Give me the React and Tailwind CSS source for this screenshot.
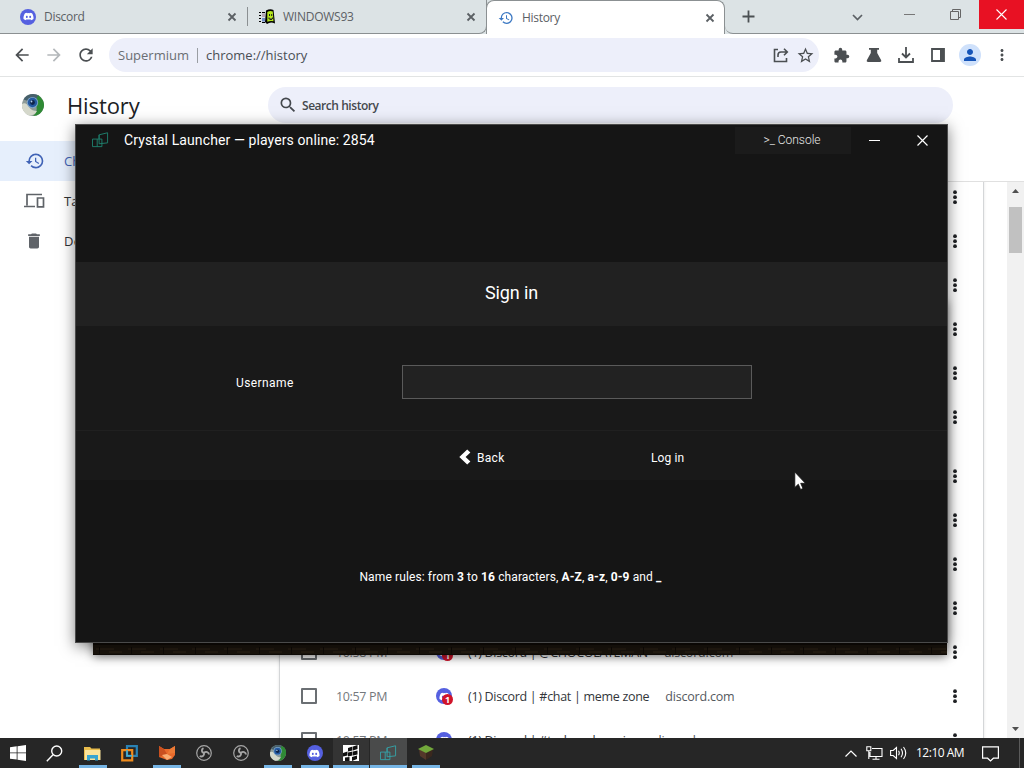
import React from 'react';
import {
  MdArrowBack,
  MdArrowForward,
  MdRefresh,
  MdStarBorder,
  MdExtension,
  MdPerson,
  MdMoreVert,
  MdSearch,
  MdHistory,
  MdDelete,
} from 'react-icons/md';
import { FaDiscord } from 'react-icons/fa';

// History rows, the first ones sit behind the launcher window
const firstGroup = [1, 2, 3, 4, 5, 6];
const secondGroup = [
  { id: 7 },
  { id: 8 },
  { id: 9 },
  { id: 10 },
  { id: 11, time: '10:58 PM', title: '(1) Discord | @CHOCOLATEMAN', site: 'discord.com', badge: true },
  { id: 12, time: '10:57 PM', title: '(1) Discord | #chat | meme zone', site: 'discord.com', badge: true },
  { id: 13, time: '10:57 PM', title: '(1) Discord | #tech and movies', site: 'discord.com' },
];

function DiscordIcon({ badge }) {
  return (
    <span className="relative flex w-4 h-4 rounded-full bg-[#5560e0] items-center justify-center text-white shrink-0">
      <FaDiscord className="w-[11px] h-[11px]" />
      {badge && (
        <span className="absolute -right-px -bottom-px w-[11px] h-[11px] rounded-full bg-[#d0142a] text-[9px] leading-[11px] font-bold text-center">
          1
        </span>
      )}
    </span>
  );
}

function CloseIcon({ className }) {
  return (
    <svg className={className} viewBox="0 0 10 10" fill="none" stroke="currentColor" strokeWidth="1.8">
      <path d="M1.500 1.500l7 7M8.500 1.500l-7 7" />
    </svg>
  );
}

function SupermiumIcon({ className }) {
  return (
    <svg className={className} viewBox="0 0 22 22">
      <circle cx="11" cy="11" r="11" fill="#8d9a98" />
      <path d="M1.500 5.500A11 11 0 0 1 17 1.800L12 9z" fill="#47606b" />
      <path d="M16 1.200A11 11 0 0 1 11 22c4-3 5-8 2-13z" fill="#2f8a35" />
      <path d="M0 10c3-2 5 0 7 3s5 4 8 4c-2 4-6 5-8 4.500A11 11 0 0 1 0 10z" fill="#d5d8cb" />
      <circle cx="10.500" cy="8.500" r="5.600" fill="#7fa6cc" />
      <circle cx="10.500" cy="8.500" r="4.700" fill="#2459a0" />
      <circle cx="10.500" cy="8.500" r="2.400" fill="#0f2449" />
      <circle cx="9.500" cy="7.500" r=".9" fill="#b5d2f0" />
    </svg>
  );
}

function CrystalIcon({ className }) {
  return (
    <svg className={className} viewBox="0 0 18 18" fill="none" stroke="currentColor" strokeWidth="1">
      <path d="M.5 7.500H10.500V15.500H.500ZM5.500 7.500V15.500M7.500 3L16.500.800V11.500L7.500 12.500ZM7.500 7.500V3" />
    </svg>
  );
}

function Win93Icon() {
  return (
    <svg className="w-4 h-4" viewBox="0 0 16 16">
      <path d="M7 1.500q4-2 7.500-.5V1L16 14.500q-3.500-1.500-6-.5l-2 1-2-2z" fill="#000" />
      <path d="M8.300 3q2.700-1.500 5.500-.5l.7 9.800q-3-1-6.200.500z" fill="#b5e61d" />
      <path d="M10 5h1v2h-1zM12.200 5h1v2h-1zM9.500 8.500h1v1h2.500v-1h1V10h-1v1h-2.500v-1h-1z" fill="#222" />
      <path d="M0 3h2v1H0zM3 3h3v1H3zM0 6h2v1H0zM0 9h2v1H0zM0 12h2v1H0zM3 13h3v1H3z" fill="#000" />
      <path d="M3 4.500h3v3.500H3z" fill="#b6a7b8" />
      <path d="M3 9h3v3.500H3z" fill="#6f8cc8" />
    </svg>
  );
}

function TabStrip() {
  return (
    <div className="flex h-[34px] shrink-0 bg-[#dce3e5] text-[12px] text-[#5b6064]">
      <div className="flex items-center w-[247px] pl-5 border-b border-[#8b9092]">
        <DiscordIcon />
        <span className="ml-2 tracking-[-0.3px]">Discord</span>
        <CloseIcon className="w-[10px] h-[10px] ml-auto mr-[10px]" />
      </div>
      <div className="flex items-center w-[240px] border-b border-r border-[#8b9092] rounded-br-lg">
        <span className="w-px h-[19px] bg-[#8b9092] mr-[11px]" />
        <Win93Icon />
        <span className="ml-[8px] tracking-[-0.25px]">WINDOWS93</span>
        <CloseIcon className="w-[10px] h-[10px] ml-auto mr-[10px]" />
      </div>
      <div className="flex items-center w-[239px] -ml-px pl-[11px] bg-white border border-b-0 border-[#8b9092] rounded-t-lg">
        <MdHistory className="w-4 h-4 text-[#3b78c3]" />
        <span className="ml-[8px] tracking-[-0.3px]">History</span>
        <CloseIcon className="w-[10px] h-[10px] ml-auto mr-[9px]" />
      </div>
      <div className="flex flex-1 border-b border-[#8b9092] rounded-bl-lg">
        <svg className="w-[13px] h-[13px] ml-[17px] mt-[10px]" viewBox="0 0 13 13" stroke="#4b5053" strokeWidth="1.800">
          <path d="M6.500 .5v12M.5 6.500h12" />
        </svg>
        <svg className="w-[11px] h-[7px] ml-[97px] mt-[14px]" viewBox="0 0 11 7" fill="none" stroke="#5b6064" strokeWidth="1.700">
          <path d="M1 1l4.500 4.500L10 1" />
        </svg>
        <span className="w-[11px] h-px bg-[#777] ml-[41px] mt-[14px]" />
        <svg className="w-[11px] h-[11px] ml-[35px] mt-[9px]" viewBox="0 0 11 11" fill="none" stroke="#666" strokeWidth="1">
          <path d="M.5 2.500h8v8h-8zM2.500 2.500v-2h8v8h-2" />
        </svg>
        <div className="flex items-center justify-center w-[45px] h-[29px] ml-auto bg-[#e81123] text-white">
          <svg className="w-[11px] h-[11px]" viewBox="0 0 11 11" stroke="currentColor" strokeWidth="1.100">
            <path d="M.5 .5l10 10M10.500 .5l-10 10" />
          </svg>
        </div>
      </div>
    </div>
  );
}

function Toolbar() {
  return (
    <div className="flex items-center h-[43px] shrink-0 bg-white border-b border-[#e2e4e4] text-[#4b4f52]">
      <MdArrowBack className="w-5 h-5 ml-3" />
      <MdArrowForward className="w-5 h-5 ml-3 text-[#b4b8bb]" />
      <MdRefresh className="w-5 h-5 ml-3" />
      <div className="flex items-center w-[710px] h-[34px] ml-[13px] pl-[9px] pr-[4px] rounded-full bg-[#edeffa] text-[13px]">
        <span className="pt-px text-[#6a6e73]">Supermium</span>
        <span className="w-px h-[15px] mx-[8px] bg-[#9a9ea3]" />
        <span className="pt-px text-[#4a4e54]">chrome://history</span>
        <svg className="w-4 h-4 ml-auto" viewBox="0 0 16 16" fill="none" stroke="currentColor" strokeWidth="1.600">
          <path d="M5 2.500H1.500v12h12V11M5 10V8q0-3 3-3h6M11 1.800L14.300 5 11 8.200" />
        </svg>
        <MdStarBorder className="w-[19px] h-[19px] ml-[7px]" />
      </div>
      <MdExtension className="w-[17px] h-[17px] ml-[14px]" />
      <svg className="w-4 h-4 ml-4" viewBox="0 0 16 16" fill="currentColor">
        <path d="M3 1h10v1.800h-1.800V6l4 7.200Q15.800 15 14 15H2Q.2 15 .8 13.200L4.800 6V2.800H3z" />
      </svg>
      <svg className="w-4 h-4 ml-4" viewBox="0 0 16 16" fill="none" stroke="currentColor" strokeWidth="1.800">
        <path d="M8 0v10M4 6.500l4 4 4-4M1 11v4h14v-4" />
      </svg>
      <svg className="w-[14px] h-[14px] ml-[17px]" viewBox="0 0 14 14">
        <path d="M1 1h12v12H1z" fill="none" stroke="currentColor" strokeWidth="1.800" />
        <path d="M9 1h4v12H9z" fill="currentColor" />
      </svg>
      <span className="flex items-center justify-center w-[22px] h-[22px] ml-[14px] rounded-full bg-[#cfe1fb] text-[#1554b8]">
        <MdPerson className="w-[18px] h-[18px]" />
      </span>
      <MdMoreVert className="w-[18px] h-[18px] ml-[12px]" />
    </div>
  );
}

function HistoryRow({ time, title, site, badge }) {
  return (
    <div className="flex items-center h-11 pl-[21px] pr-[18px] text-[12.5px] text-[#33363a]">
      <span className="w-4 h-4 mr-[19px] border-2 border-[#6b6f73] rounded-[1px] shrink-0" />
      <span className="w-[100px] pt-[2px] tracking-[-0.35px] text-[#74787c]">{time}</span>
      {title && <DiscordIcon badge={badge} />}
      <span className="ml-4 pt-[2px] tracking-[-0.3px] whitespace-pre">{title}</span>
      <span className="ml-4 pt-[2px] tracking-[-0.2px] text-[#55595e]">{site}</span>
      <svg className="w-5 h-4 ml-auto shrink-0" viewBox="0 0 20 16" fill="#1f2124">
        <circle cx="10" cy="3.200" r="1.900" />
        <circle cx="10" cy="8.200" r="1.900" />
        <circle cx="10" cy="13.200" r="1.900" />
      </svg>
    </div>
  );
}

function HistoryPage() {
  return (
    <div className="flex flex-1 min-h-0 bg-white">
      {/* Sidebar */}
      <div className="w-[268px] shrink-0 text-[13px] text-[#303336]">
        <div className="flex items-center h-16 pl-[22px] pb-[8px]">
          <SupermiumIcon className="w-[22px] h-[22px]" />
          <h1 className="ml-[23px] pt-px text-[22px] font-medium tracking-[-0.1px] text-[#202124]">History</h1>
        </div>
        <div className="flex items-center h-10 pl-[25px] bg-[#e6effc] text-[#3f62b5]">
          <MdHistory className="w-5 h-5" />
          <span className="ml-[19px] pt-[2px] font-medium">Chrome history</span>
        </div>
        <div className="flex items-center h-10 pl-6">
          <svg className="w-[21px] h-[16px]" viewBox="0 0 21 16" fill="none" stroke="#5f6368" strokeWidth="1.700">
            <path d="M3 12.500V1.500H18M0 13.500h11M13.500 5h6v8.800h-6z" />
          </svg>
          <span className="ml-[19px] pt-[2px] font-medium">Tabs from other devices</span>
        </div>
        <div className="flex items-center h-10 pl-6">
          <MdDelete className="w-5 h-5 text-[#5f6368]" />
          <span className="ml-5 pt-[2px] font-medium tracking-[0.4px]">Delete browsing data</span>
        </div>
      </div>

      {/* Search and list */}
      <div className="flex flex-col flex-1 min-w-0">
        <div className="flex items-center w-[685px] h-9 mt-[10px] pl-[11px] rounded-full bg-[#edeffa] text-[12px] text-[#45494e]">
          <MdSearch className="w-5 h-5 -ml-px" />
          <span className="ml-1 pt-[2px] font-semibold tracking-[-0.45px]">Search history</span>
        </div>
        <div className="flex flex-1 min-h-0 mt-[58px] border-t border-[#e0e0e0]">
          <div className="flex-1 pl-[11px] overflow-hidden">
            <div className="w-[705px] -mt-[7px] border-x border-[#d4d6d8] shadow-sm">
              {firstGroup.map((id) => (
                <HistoryRow key={id} />
              ))}
              <div className="h-[15px]" />
              {secondGroup.map((row) => (
                <HistoryRow key={row.id} {...row} />
              ))}
            </div>
          </div>
          {/* Scrollbar */}
          <div className="flex flex-col items-center w-[17px] bg-[#f1f1f1]">
            <svg className="w-[7px] h-[4px] mt-[7px]" viewBox="0 0 7 4" fill="#505050">
              <path d="M0 4L3.500 0 7 4z" />
            </svg>
            <div className="w-[13px] h-[46px] mt-[14px] bg-[#c1c1c1]" />
            <svg className="w-[7px] h-[4px] mt-auto mb-[7px]" viewBox="0 0 7 4" fill="#505050">
              <path d="M0 0L3.500 4 7 0z" />
            </svg>
          </div>
        </div>
      </div>
    </div>
  );
}

function Launcher() {
  return (
    <div className="absolute left-[75px] top-[124px] w-[873px] h-[519px] flex flex-col bg-[#151515] border border-[#4a4a4a] text-white font-['Roboto',sans-serif] shadow-[0_3px_14px_rgba(0,0,0,0.5)]">
      <div className="flex items-center h-[31px] pl-4">
        <CrystalIcon className="w-[17px] h-[17px] text-[#1f7f6c]" />
        <span className="ml-[15px] text-[14px] tracking-[0.1px]">Crystal Launcher — players online: 2854</span>
        <div className="flex items-center justify-center w-[116px] h-[27px] ml-auto pr-[2px] pb-[2px] bg-[#1b1b1b] text-[12px] font-light text-[#e8e8e8]">
          &gt;_ Console
        </div>
        <span className="w-[11px] h-px ml-[18px] bg-white" />
        <svg className="w-[11px] h-[11px] ml-[37px] mr-[19px]" viewBox="0 0 11 11" stroke="#fff" strokeWidth="1.200">
          <path d="M.5 .5l10 10M10.500 .5l-10 10" />
        </svg>
      </div>

      <div className="flex items-center justify-center h-[64px] mt-[106px] pb-[3px] bg-[#212121] text-[18px] tracking-[-0.1px]">
        Sign in
      </div>

      <div className="flex items-center h-[104px] pl-[160px] pt-[8px] bg-[#191919]">
        <label className="w-[166px] pt-px text-[12px] tracking-[0.4px]" htmlFor="username">
          Username
        </label>
        <input id="username" className="w-[350px] h-[34px] border border-[#5a5a5a] bg-[#222222] outline-none" />
      </div>
      <div className="flex items-center h-[50px] pt-[4px] bg-[#191919] border-t border-[#202020] text-[12px]">
        <div className="flex items-center ml-[383px] w-[192px]">
          <svg className="w-[12px] h-[16px] -mt-[2px]" viewBox="0 0 12 16" fill="#fff">
            <path d="M8.200 .5L11.400 3.500 6.600 8l4.800 4.500-3.200 3L.3 8z" />
          </svg>
          <span className="ml-[6px] tracking-[0.3px]">Back</span>
        </div>
        <span className="tracking-[0.1px]">Log in</span>
      </div>

      <p className="mt-[88px] pr-[2px] text-center text-[12px] leading-[18px] tracking-[0.12px]">
        Name rules: from <b>3</b> to <b>16</b> characters, <b>A-Z</b>, <b>a-z</b>, <b>0-9</b> and <b>_</b>
      </p>
    </div>
  );
}

function TaskButton({ children, state }) {
  return (
    <div
      className={
        state === 'active'
          ? 'flex flex-col items-center w-[37px] bg-[#4a4b4b]'
          : state === 'grouped'
            ? 'flex flex-col items-center w-[37px] bg-[#343434] border-r border-[#262626]'
            : 'flex flex-col items-center w-[37px]'
      }
    >
      <span className="flex flex-1 items-center pt-[3px]">{children}</span>
      {state && <span className={state === 'open' ? 'w-7 h-[3px] bg-[#76b5e5]' : 'w-full h-[3px] bg-[#76b5e5]'} />}
      {!state && <span className="h-[3px]" />}
    </div>
  );
}

function ObsIcon() {
  return (
    <svg className="w-4 h-4" viewBox="0 0 16 16" fill="none" stroke="#a6a6a6" strokeWidth="1.200">
      <circle cx="8" cy="8" r="7.300" />
      <path d="M8 8C5.500 7.500 5 4.500 7.500 3.200M8 8c1.800-2 4.800-1 5 1.500M8 8c.5 2.500-1.800 4.300-4.300 3" strokeWidth="1.900" />
    </svg>
  );
}

function Taskbar() {
  return (
    <div className="relative flex h-[30px] shrink-0 bg-[#262626] text-white">
      <div className="flex items-center w-[36px] pl-[10px]">
        <svg className="w-4 h-4" viewBox="0 0 16 16" fill="#fff">
          <path d="M0 2.200L6.700 1.300v6.200H0zM7.500 1.200L16 0v7.500H7.500zM0 8.300h6.700v6.300L0 13.700zM7.500 8.300H16V16l-8.500-1.200z" />
        </svg>
      </div>
      <div className="flex items-center w-[38px] pl-[10px]">
        <svg className="w-[17px] h-[17px]" viewBox="0 0 17 17" fill="none" stroke="#fff" strokeWidth="1.400">
          <circle cx="10.700" cy="6" r="5" />
          <path d="M7 9.800L.8 16.200" />
        </svg>
      </div>
      <TaskButton state="open">
        <svg className="w-[17px] h-[15px]" viewBox="0 0 17 15">
          <path d="M0 1h6l1.500 1.500H16V14H0z" fill="#e9bd4c" />
          <path d="M1 4h15.500v10H1z" fill="#fbe49b" />
          <path d="M3 9h11v5.500h-3v-2H6v2H3z" fill="#38a5d1" />
        </svg>
      </TaskButton>
      <TaskButton>
        <svg className="w-[17px] h-[17px]" viewBox="0 0 17 17" fill="none" strokeWidth="2.200">
          <path d="M6 1.200h9.800v9.600H6z" stroke="#2a83b5" />
          <path d="M1.200 5.200h10v10.200h-10z" stroke="#f08c1d" />
          <path d="M6 5v5.800h5" stroke="#4bb0cf" strokeWidth="1.500" />
        </svg>
      </TaskButton>
      <TaskButton state="open">
        <svg className="w-4 h-[14px]" viewBox="0 0 16 14">
          <path d="M0 0l5 3h6l5-3v9l-3 4-5 1-8-3z" fill="#e96a2b" />
          <path d="M0 0l5 3 3 5-8 3z" fill="#c9501f" />
          <path d="M8 8l3-5 5-3v7z" fill="#ec7a35" />
          <path d="M3 9l5-1 5 3-5 3z" fill="#f9ad72" />
        </svg>
      </TaskButton>
      <TaskButton>
        <ObsIcon />
      </TaskButton>
      <TaskButton>
        <ObsIcon />
      </TaskButton>
      <TaskButton state="open">
        <SupermiumIcon className="w-4 h-4" />
      </TaskButton>
      <TaskButton state="open">
        <DiscordIcon />
      </TaskButton>
      <TaskButton state="grouped">
        <svg className="w-4 h-4" viewBox="0 0 16 16">
          <path d="M0 0h16v16H0z" fill="#fff" />
          <path d="M5 3l4.500-1.500v4L5 6.500zM10 1.500L14.500 0v4L10 5.500zM0 8l4.500-1.500v4L0 11.500zM5 7.500l4.500-1v4L5 11.500zM10 6.500l4.500-1v4l-4.500 1zM2 12.500l4.500-.5v4H2zM9 12l5-1.500V14l-5 2z" fill="#111" />
        </svg>
      </TaskButton>
      <TaskButton state="active">
        <CrystalIcon className="w-[17px] h-[17px] text-[#35a0a5]" />
      </TaskButton>
      <TaskButton state="open">
        <svg className="w-4 h-4" viewBox="0 0 16 16">
          <path d="M1 4l7 3.500V15L2 11z" fill="#54382a" />
          <path d="M15 4L8 7.500V15l6-4z" fill="#3a281e" />
          <path d="M8 0l8 4-8 4-8-4z" fill="#72a83b" />
        </svg>
      </TaskButton>

      {/* System tray */}
      <div className="flex items-center ml-auto">
        <svg className="w-3 h-[7px]" viewBox="0 0 12 7" fill="none" stroke="#fff" strokeWidth="1.200">
          <path d="M.5 6.500L6 1l5.500 5.500" />
        </svg>
        <svg className="w-[17px] h-[14px] ml-[9px]" viewBox="0 0 17 14" fill="none" stroke="#fff" strokeWidth="1.100">
          <path d="M6 2.500h10v8H4V6M10 10.500v2.500M6.500 13.300h7M.8.800h4v4h-4zM2.800 5v8" />
        </svg>
        <svg className="w-[17px] h-[14px] ml-[7px]" viewBox="0 0 17 14" fill="none" stroke="#fff" strokeWidth="1.100">
          <path d="M.6 4.500h2.600L6.500 1.500v11L3.200 9.500H.6zM8.500 4.800q1.500 2.200 0 4.400M11 2.800q3 4.200 0 8.400M13.500 1q4.500 6 0 12" />
        </svg>
        <span className="w-[50px] ml-[9px] text-[12px] tracking-[-0.5px] whitespace-nowrap">12:10 AM</span>
        <svg className="w-[17px] h-[16px] ml-[16px] mt-[2px]" viewBox="0 0 17 16" fill="none" stroke="#fff" strokeWidth="1.200">
          <path d="M.6.800h15.800v11.400h-5L8.500 15 5.600 12.200h-5z" />
        </svg>
        <span className="w-px h-full ml-[20px] mr-1 bg-[#5a5a5a]" />
      </div>
    </div>
  );
}

function App() {
  return (
    <div className="relative flex flex-col w-[1024px] h-[768px] overflow-hidden font-['Open_Sans','Noto_Sans',sans-serif]">
      <TabStrip />
      <Toolbar />
      <HistoryPage />

      {/* Game window peeking out under the launcher */}
      <div className="absolute left-[93px] top-[300px] w-[854px] h-[355px] flex flex-col justify-end bg-[#15100b] shadow-[0_2px_9px_rgba(0,0,0,0.5)]">
        <svg className="w-full h-[12px]">
          <defs>
            <pattern id="dirt" width="32" height="12" patternUnits="userSpaceOnUse">
              <path d="M0 0h32v12H0z" fill="#1a140d" />
              <path d="M3 5h18v2H3zM16 8h13v2H16z" fill="#241c12" />
              <path d="M0 0h32v2H0zM6 4h1v8H6zM0 11h32v1H0z" fill="#0f0b07" />
            </pattern>
          </defs>
          <rect width="855" height="12" fill="url(#dirt)" />
        </svg>
      </div>
      <Launcher />

      {/* Mouse pointer */}
      <svg className="absolute left-[794px] top-[471px] w-[12px] h-[19px]" viewBox="0 0 12 19">
        <path d="M.8 1v15.500l3.500-3.300 2.300 5.300 2.400-1-2.300-5.200h4.700z" fill="#fff" stroke="#111" strokeWidth=".8" />
      </svg>

      <Taskbar />
    </div>
  );
}

export default App;
